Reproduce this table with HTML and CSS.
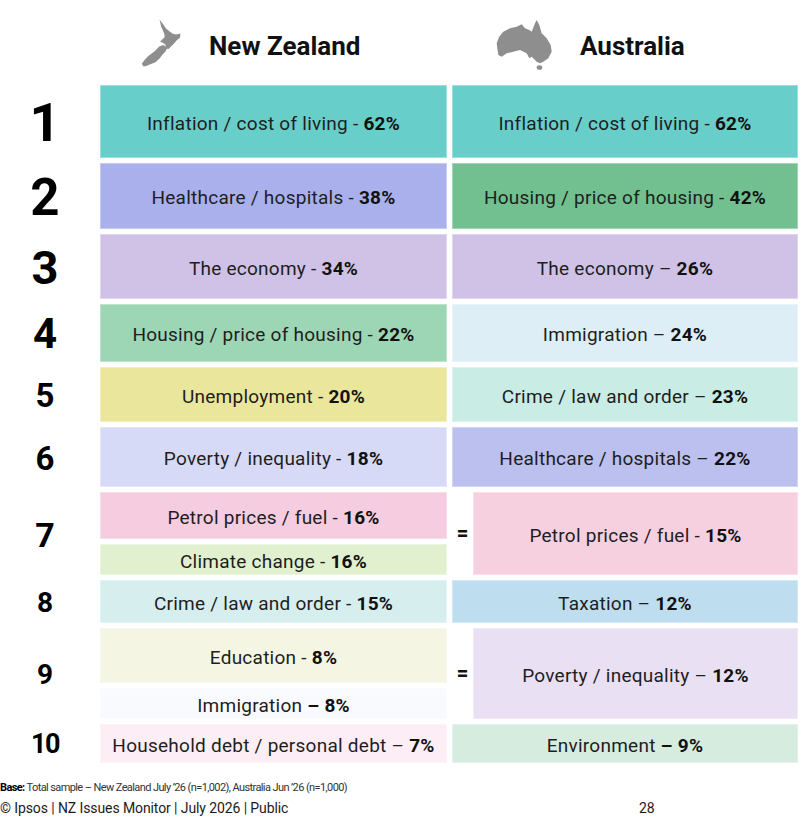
FILE: index.html
```html
<!DOCTYPE html>
<html lang="en">
<head>
<meta charset="utf-8">
<title>NZ Issues Monitor – Top issues comparison</title>
<link rel="stylesheet" href="styles.css">
</head>
<body>
<div class="page">
  <div class="board">
    <div class="head-spacer"></div>
    <div class="head head-nz">
      <svg class="map map-nz" viewBox="0 0 60 62" width="60" height="62" aria-hidden="true">
        <path d="M29.5 4.5 L33.3 9.5 L36 13.5 L39.3 16.2 L42.7 18.8 L46 19.5 L50.5 18.5 L50 22.7 L46.5 25.5 L44.5 28 L42 30.5 L38.5 34 L35.5 33.2 L35.5 29.8 L32.8 27.8 L30 26.5 L32.8 24 L34.8 22 L34.2 18.7 L32.8 15.3 L31.2 11.7 Z"/>
        <path d="M29.5 31.2 L33.5 30 L37.2 33 L35.5 36.5 L33 39 L29.8 43.2 L25.5 47.2 L21 49 L16.8 50.8 L13.5 51.5 L11.8 48.8 L14.5 45 L18 41.3 L21.3 38.8 L24.7 36.2 L28 32.8 Z"/>
      </svg>
      <span class="country">New Zealand</span>
    </div>
    <div class="head head-au">
      <svg class="map map-au" viewBox="0 0 70 62" width="70" height="62" aria-hidden="true">
        <path d="M6.7 28.3 L9 22 L13.3 16.7 L20 13.3 L26.7 11.7 L31.7 9.3 L35 13.3 L39.3 15 L41.7 16.7 L45 8.3 L46.7 5 L49.3 10 L51.7 18.3 L56.7 23.3 L60.7 30 L61.7 36.7 L58.3 43.3 L53.3 46.7 L50 48.3 L46.7 46.7 L41.7 41.7 L39.3 43.3 L36.7 38.3 L30 35 L23.3 36.7 L16.7 38.3 L11.7 41.7 L8.3 40 L7.3 33.3 Z"/>
        <ellipse cx="49.5" cy="52.5" rx="2.8" ry="2.3"/>
      </svg>
      <span class="country">Australia</span>
    </div>

    <div class="rank r1">1</div>
    <div class="cell c-teal">Inflation / cost of living -&nbsp;<b>62%</b></div>
    <div class="cell c-teal">Inflation / cost of living -&nbsp;<b>62%</b></div>

    <div class="rank r2">2</div>
    <div class="cell c-periwinkle">Healthcare / hospitals -&nbsp;<b>38%</b></div>
    <div class="cell c-green">Housing / price of housing -&nbsp;<b>42%</b></div>

    <div class="rank r3">3</div>
    <div class="cell c-lavender">The economy -&nbsp;<b>34%</b></div>
    <div class="cell c-lavender">The economy –&nbsp;<b>26%</b></div>

    <div class="rank r4">4</div>
    <div class="cell c-mint">Housing / price of housing -&nbsp;<b>22%</b></div>
    <div class="cell c-paleblue">Immigration –&nbsp;<b>24%</b></div>

    <div class="rank r5">5</div>
    <div class="cell c-yellow">Unemployment -&nbsp;<b>20%</b></div>
    <div class="cell c-paleteal">Crime / law and order –&nbsp;<b>23%</b></div>

    <div class="rank r6">6</div>
    <div class="cell c-palelav">Poverty / inequality -&nbsp;<b>18%</b></div>
    <div class="cell c-blue">Healthcare / hospitals –&nbsp;<b>22%</b></div>

    <div class="rank r7">7</div>
    <div class="stack stack-7">
      <div class="cell c-pink">Petrol prices / fuel -&nbsp;<b>16%</b></div>
      <div class="cell c-palegreen">Climate change -&nbsp;<b>16%</b></div>
    </div>
    <div class="tied">
      <span class="eq">=</span>
      <div class="cell c-pink2">Petrol prices / fuel -&nbsp;<b>15%</b></div>
    </div>

    <div class="rank r8">8</div>
    <div class="cell c-icy">Crime / law and order -&nbsp;<b>15%</b></div>
    <div class="cell c-sky">Taxation –&nbsp;<b>12%</b></div>

    <div class="rank r9">9</div>
    <div class="stack stack-9">
      <div class="cell c-cream">Education -&nbsp;<b>8%</b></div>
      <div class="cell c-ghost">Immigration&nbsp;<b>– 8%</b></div>
    </div>
    <div class="tied">
      <span class="eq">=</span>
      <div class="cell c-lilac">Poverty / inequality –&nbsp;<b>12%</b></div>
    </div>

    <div class="rank r10">10</div>
    <div class="cell c-blush">Household debt / personal debt –&nbsp;<b>7%</b></div>
    <div class="cell c-sage">Environment&nbsp;<b>– 9%</b></div>
  </div>

  <div class="footer">
    <p class="base"><b>Base:</b> Total sample – New Zealand July ’26 (n=1,002), Australia Jun ’26 (n=1,000)</p>
    <div class="foot-line">
      <span class="copy">© Ipsos | NZ Issues Monitor | July 2026 | Public</span>
      <span class="pageno">28</span>
    </div>
  </div>
</div>
</body>
</html>
```

FILE: styles.css
```css
* { box-sizing: border-box; }

html, body {
  margin: 0;
  padding: 0;
  background: #ffffff;
}

body {
  font-family: Roboto, "Liberation Sans", Arial, sans-serif;
  color: #1e1e1e;
  width: 812px;
  height: 837px;
  overflow: hidden;
}

.page {
  width: 812px;
}

.board {
  display: grid;
  grid-template-columns: 95px 347px 346px;
  grid-template-rows: 80px 73px 66px 65px 58px 55px 60px 83px 43px 91px 39px;
  column-gap: 5px;
  row-gap: 5px;
  width: 798px;
}

.head {
  display: flex;
  align-items: center;
  padding-top: 12px;
}

.head-nz { padding-left: 30px; }
.head-au { padding-left: 38px; }

.map {
  fill: #8e8e8e;
  flex: none;
}

.head-nz .country { margin-left: 19px; }
.head-au .country { margin-left: 20px; }

.country {
  font-weight: 700;
  font-size: 26px;
  color: #111111;
  letter-spacing: 0;
}

.rank {
  display: flex;
  align-items: center;
  justify-content: center;
  font-weight: 700;
  color: #000000;
  margin-right: 5px;
  line-height: 1;
  padding-top: 2px;
}

.r1 { font-size: 54px; }
.r2 { font-size: 51px; }
.r3 { font-size: 47px; }
.r4 { font-size: 42px; }
.r5 { font-size: 33px; }
.r6 { font-size: 33px; }
.r7 { font-size: 34px; }
.r8 { font-size: 28px; }
.r9 { font-size: 28px; }
.r10 { font-size: 27px; letter-spacing: -1.5px; }

.cell {
  display: flex;
  align-items: center;
  justify-content: center;
  font-size: 19px;
  letter-spacing: 0.25px;
  white-space: nowrap;
  padding-top: 3px;
  border: 1px solid rgba(255, 255, 255, 0.35);
}

.cell b {
  font-weight: 700;
  color: #111111;
}

.stack {
  display: flex;
  flex-direction: column;
  gap: 5px;
}

.stack-7 .cell:first-child { flex: 0 0 47px; }
.stack-7 .cell:last-child { flex: 1 1 auto; }
.stack-9 .cell:first-child { flex: 0 0 55px; }
.stack-9 .cell:last-child { flex: 1 1 auto; }

.tied {
  display: flex;
  align-items: stretch;
}

.eq {
  flex: 0 0 21px;
  display: flex;
  align-items: center;
  justify-content: center;
  font-weight: 900;
  font-size: 20px;
  color: #111111;
  padding-bottom: 2px;
}

.tied .cell { flex: 1 1 auto; }

.c-teal { background: #67cec9; }
.c-periwinkle { background: #a9b0ec; }
.c-green { background: #72c08f; }
.c-lavender { background: #d0c1e6; }
.c-mint { background: #9dd6b4; }
.c-paleblue { background: #ddeef6; }
.c-yellow { background: #eae79c; }
.c-paleteal { background: #c9ede4; }
.c-palelav { background: #d7daf6; }
.c-blue { background: #bbc0ee; }
.c-pink { background: #f5cce0; }
.c-palegreen { background: #e1f0cf; }
.c-pink2 { background: #f7d0e0; }
.c-icy { background: #d6eeee; }
.c-sky { background: #bedef0; }
.c-cream { background: #f4f6e3; }
.c-ghost { background: #f9fafe; }
.c-lilac { background: #eae0f4; }
.c-blush { background: #fdeef5; }
.c-sage { background: #d6ecdf; }

.footer {
  margin-top: 18px;
}

.base {
  margin: 0;
  font-size: 11px;
  letter-spacing: -0.6px;
  color: #333333;
  line-height: 14px;
}

.base b {
  color: #000000;
  font-weight: 700;
}

.foot-line {
  display: flex;
  align-items: center;
  margin-top: 4px;
  font-size: 14px;
  color: #1b1b1b;
  line-height: 18px;
}

.copy {
  flex: 0 0 639px;
  letter-spacing: -0.1px;
}

.pageno {
  font-size: 14px;
}
```
